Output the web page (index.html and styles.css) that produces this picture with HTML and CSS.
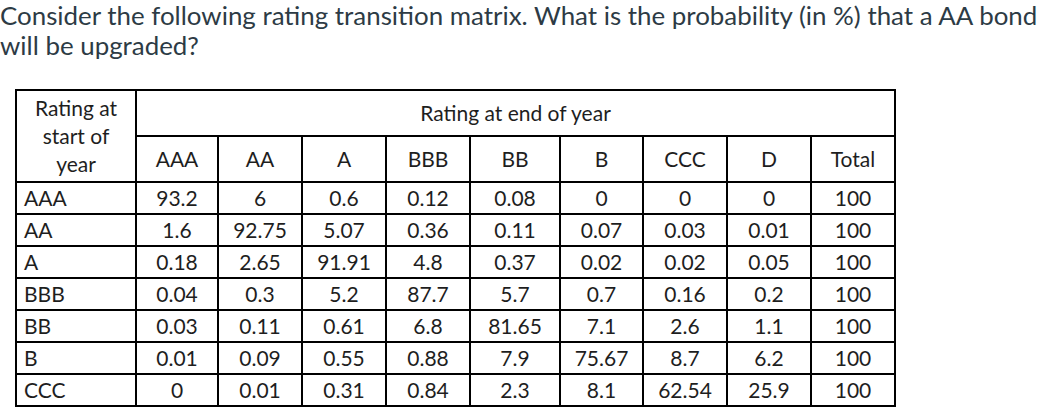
FILE: index.html
```html
<!DOCTYPE html>
<html>
<head>
<meta charset="utf-8">
<link rel="stylesheet" href="styles.css">
</head>
<body>
<p class="question">Consider the following rating transition matrix. What is the probability (in %) that a AA bond will be upgraded?</p>
<table class="matrix">
  <colgroup>
    <col class="c-label"><col class="c82"><col class="c84"><col class="c84"><col class="c84"><col class="c90"><col class="c83"><col class="c84"><col class="c84"><col class="c84"><col class="c81">
  </colgroup>
  <tr class="h1">
    <td class="label start" rowspan="2">Rating at start of year</td>
    <td colspan="9">Rating at end of year</td>
  </tr>
  <tr class="h2">
    <td>AAA</td><td>AA</td><td>A</td><td>BBB</td><td>BB</td><td>B</td><td>CCC</td><td>D</td><td>Total</td>
  </tr>
  <tr><td class="label">AAA</td><td>93.2</td><td>6</td><td>0.6</td><td>0.12</td><td>0.08</td><td>0</td><td>0</td><td>0</td><td>100</td></tr>
  <tr><td class="label">AA</td><td>1.6</td><td>92.75</td><td>5.07</td><td>0.36</td><td>0.11</td><td>0.07</td><td>0.03</td><td>0.01</td><td>100</td></tr>
  <tr><td class="label">A</td><td>0.18</td><td>2.65</td><td>91.91</td><td>4.8</td><td>0.37</td><td>0.02</td><td>0.02</td><td>0.05</td><td>100</td></tr>
  <tr><td class="label">BBB</td><td>0.04</td><td>0.3</td><td>5.2</td><td>87.7</td><td>5.7</td><td>0.7</td><td>0.16</td><td>0.2</td><td>100</td></tr>
  <tr><td class="label">BB</td><td>0.03</td><td>0.11</td><td>0.61</td><td>6.8</td><td>81.65</td><td>7.1</td><td>2.6</td><td>1.1</td><td>100</td></tr>
  <tr><td class="label">B</td><td>0.01</td><td>0.09</td><td>0.55</td><td>0.88</td><td>7.9</td><td>75.67</td><td>8.7</td><td>6.2</td><td>100</td></tr>
  <tr><td class="label">CCC</td><td>0</td><td>0.01</td><td>0.31</td><td>0.84</td><td>2.3</td><td>8.1</td><td>62.54</td><td>25.9</td><td>100</td></tr>
</table>
</body>
</html>
```
FILE: styles.css
```css
html, body {
  margin: 0;
  padding: 0;
  background: #fff;
}
body {
  font-family: Lato, "Open Sans", "Liberation Sans", sans-serif;
}
.question {
  margin: 0;
  padding: 0;
  font-size: 25.9px;
  line-height: 30px;
  color: #2d3b45;
  width: 1046px;
}
.matrix {
  margin: 29px 0 0 15px;
  border-collapse: collapse;
  table-layout: fixed;
  font-size: 21px;
  color: #1e1e1e;
}
.matrix td {
  border: 2px solid #000;
  padding: 0;
  text-align: center;
  height: 30px;
  line-height: 28px;
}
.matrix .h1 td, .matrix .h2 td {
  height: 44px;
}
.matrix td.label {
  text-align: left;
  padding-left: 7px;
}
.matrix td.start {
  text-align: center;
  padding: 0 8px;
  line-height: 28px;
}
.c-label { width: 120px; }
.c82 { width: 82px; }
.c83 { width: 83px; }
.c84 { width: 84px; }
.c90 { width: 90px; }
.c81 { width: 81px; }
```
